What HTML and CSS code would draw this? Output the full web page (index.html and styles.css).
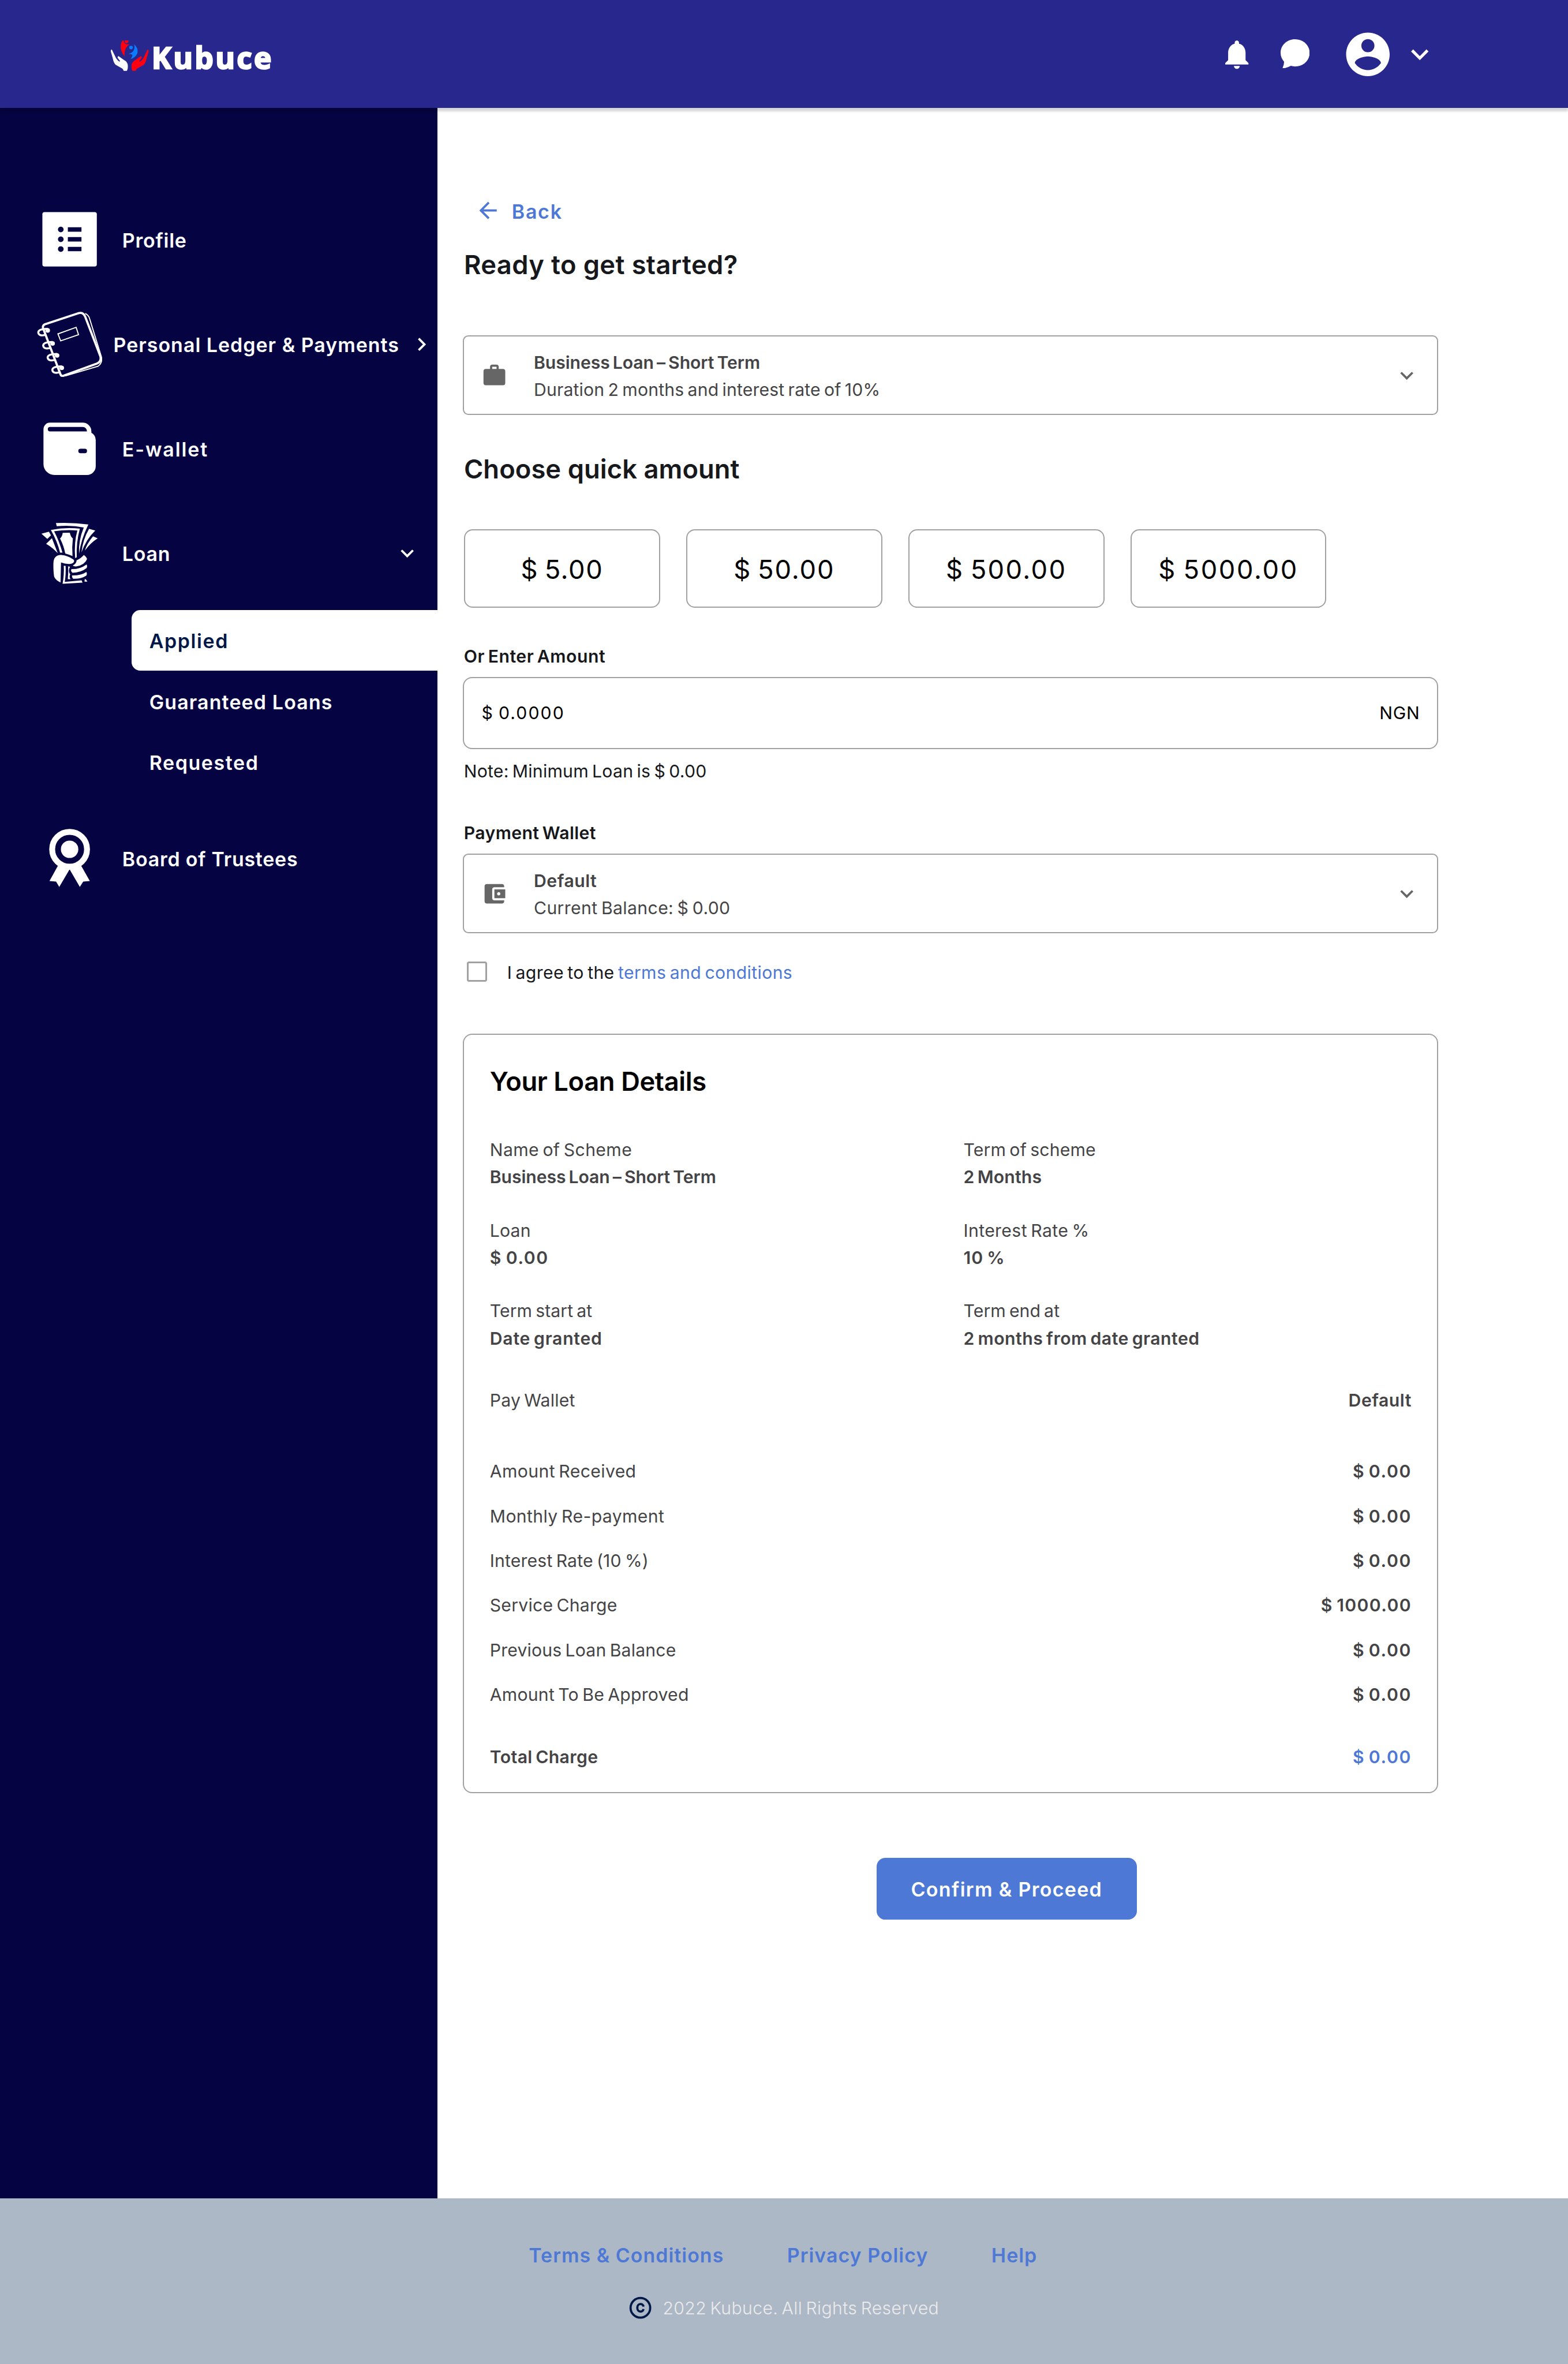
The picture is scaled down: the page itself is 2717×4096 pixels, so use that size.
FILE: index.html
```html
<!DOCTYPE html>
<html lang="en">
<head>
<meta charset="utf-8">
<title>Kubuce – Apply for a loan</title>
<link rel="stylesheet" href="styles.css">
</head>
<body>
<header class="topbar">
  <a class="logo">
    <svg class="logo-mark" viewBox="78 93 313 252">
      <defs><path id="hand" d="M84 168Q89 169 92 180Q108 212 121 240Q135 262 150 268Q158 266 152 260L134 236Q132 224 142 223L182 252Q220 272 219 305Q220 330 211 345H184Q182 328 158 317L118 294Q102 283 94 240L78 185Q78 168 84 168Z"/></defs>
      <use href="#hand" fill="#fff"/>
      <use href="#hand" fill="#ff0010" transform="translate(468 0) scale(-1 1)"/>
      <g fill="#ff0010"><path d="M175 93H184Q186 118 205 124L232 127Q185 155 192 227Q152 175 161 125Q165 105 175 93Z"/><circle cx="208" cy="101" r="15"/></g>
      <g fill="#0a7cff"><circle cx="245" cy="152" r="15"/><path d="M271 125Q305 155 299 195Q285 235 241 247Q254 235 257 214Q247 204 224 206Q248 196 259 187Q280 165 271 125Z"/></g>
    </svg>
    <span class="logo-name">Kubuce</span>
  </a>
  <nav class="tools">
    <svg class="i32" viewBox="0 0 24 24"><path d="M12 22c1.1 0 2-.9 2-2h-4c0 1.1.89 2 2 2zm6-6v-5c0-3.07-1.64-5.64-4.5-6.32V4c0-.83-.67-1.5-1.5-1.5s-1.5.67-1.5 1.5v.68C7.63 5.36 6 7.92 6 11v5l-2 2v1h16v-1l-2-2z"/></svg>
    <svg class="chat" viewBox="0 0 26.7 26.8"><path d="M13.35 0C20.8 0 26.7 5.5 26.7 12.5S20.8 25 13.35 25Q11.3 25 9.4 24.4Q6.3 26.2 2.4 26.8Q1.6 26.6 2 25.8Q3.2 23.3 3.2 20.7Q0 17 0 12.5C0 5.5 5.9 0 13.35 0Z"/></svg>
    <svg class="avatar" viewBox="0 0 24 24"><path d="M12 2C6.48 2 2 6.48 2 12s4.48 10 10 10 10-4.48 10-10S17.52 2 12 2zm0 3c1.66 0 3 1.34 3 3s-1.34 3-3 3-3-1.34-3-3 1.34-3 3-3zm0 14.2c-2.5 0-4.71-1.28-6-3.22.03-1.99 4-3.08 6-3.08 1.99 0 5.97 1.09 6 3.08-1.29 1.94-3.5 3.22-6 3.22z"/></svg>
    <svg class="i32" viewBox="0 0 24 24"><path d="M16.59 8.59L12 13.17 7.41 8.59 6 10l6 6 6-6z"/></svg>
  </nav>
</header>

<div class="body">
  <aside class="sidebar">
    <a class="nav-row">
      <svg class="nav-icon" viewBox="0 0 60 60"><path fill="#fff" d="M7 5h46a2 2 0 0 1 2 2v46a2 2 0 0 1-2 2H7a2 2 0 0 1-2-2V7a2 2 0 0 1 2-2z"/><g fill="#060343"><circle cx="21.9" cy="21" r="2.6"/><circle cx="21.9" cy="30" r="2.6"/><circle cx="21.9" cy="39" r="2.6"/><path d="M28.4 19h12.5v4H28.4zM28.4 28h12.5v4H28.4zM28.4 37h12.5v4H28.4z"/></g></svg>
      <span class="ls4">Profile</span>
    </a>
    <a class="nav-row ledger">
      <svg class="nav-icon" viewBox="34 286 60 60"><g fill="none" stroke="#fff"><path stroke-width="1" d="M78.3 287.6Q81.5 289 82.4 292.5L93.2 327.5Q94.5 333 90 336.2L60 345"/><path stroke-width="2" fill="#060343" d="M41.2 297.6Q39 298.8 39.6 301L55.6 343.5Q56.4 345.6 58.4 344.8L89 333.7Q93.6 331.8 92.2 326.8L78.4 290.8Q76.6 286.2 72.4 287.3Z"/><path stroke-width="1" d="M53.3 306.4L70 300.4L72.2 307.2L55.8 312.8Z"/></g>
        <defs><g id="ring"><path fill="none" stroke="#fff" stroke-width="1.8" d="M0-1.4Q-8.6-1.4-8.7 2Q-8 5.8-1.6 4"/><circle fill="#fff" r="2.1"/></g></defs>
        <use href="#ring" x="43.9" y="303.2"/><use href="#ring" x="48.4" y="315.2"/><use href="#ring" x="52.5" y="326.2"/><use href="#ring" x="56.8" y="337.6"/></svg>
      <span class="ls5">Personal Ledger &amp; Payments</span>
      <svg class="nav-arrow" viewBox="0 0 24 24"><path d="M8.59 16.59L13.17 12 8.59 7.41 10 6l6 6-6 6z"/></svg>
    </a>
    <a class="nav-row">
      <svg class="nav-icon" viewBox="-6 -6 60 60"><path fill="#fff" fill-rule="evenodd" d="M6 0h30a8 8 0 0 1 8 8v1.3a8 8 0 0 1 4 6.7v24a8 8 0 0 1-8 8H10A10 10 0 0 1 0 38V6a6 6 0 0 1 6-6zM6 4a2 2 0 0 0 0 4h34a4 4 0 0 0-4-4zM34 24a2 2 0 0 0 0 4h4a2 2 0 0 0 0-4z"/></svg>
      <span class="ls10">E-wallet</span>
    </a>
    <a class="nav-row loan">
      <svg class="nav-icon" viewBox="36 42 540 540"><g fill="#fff"><path d="M193 62Q330 56 461 74Q400 200 384 316Q378 210 423 99Q320 78 200 89Z"/><path d="M73 151L135 134L152 164L122 194Z"/><path d="M112 234L160 187L208 312Q165 265 112 234Z"/><path d="M151 120Q270 95 391 109Q360 220 365 346L352 352Q342 220 370 124Q280 115 178 130Q220 210 247 307L227 307Q205 215 151 120Z"/><path d="M249 143L308 142Q314 175 333 190Q324 260 330 335Q300 322 270 314Q258 250 227 190Q245 175 249 143Z"/><path d="M467 110L518 124Q440 200 404 306Q415 200 467 110Z"/><path d="M500 172L538 189Q480 225 432 290Q450 230 500 172Z"/><path d="M172 400Q172 326 235 326Q290 330 338 364Q352 378 332 394Q320 402 300 401Q268 400 235 388L231 554Q190 535 178 505Q171 460 172 400Z"/><path d="M424 326Q448 346 450 360Q430 410 360 421Q340 422 332 414Q365 395 364 370Q400 355 424 326Z"/><path d="M447 404Q455 425 445 435Q400 470 330 474Q311 458 322 443Q390 445 447 404Z"/><path d="M445 466Q453 485 443 497Q400 525 335 522Q323 510 326 495Q400 497 445 466Z"/><path d="M258 415L273 417Q276 490 266 549L405 536L413 555L248 564Q262 490 258 415Z"/><path d="M294 420L310 424Q290 455 311 488Q300 505 313 526L291 526Q297 470 294 420Z"/><path d="M429 547L432 524L442 530L453 546Z"/></g></svg>
      <span class="ls4">Loan</span>
      <svg class="nav-arrow" viewBox="0 0 24 24"><path d="M16.59 8.59L12 13.17 7.41 8.59 6 10l6 6 6-6z"/></svg>
    </a>
    <div class="subnav">
      <a class="sub active ls8">Applied</a>
      <a class="sub ls6">Guaranteed Loans</a>
      <a class="sub ls8">Requested</a>
    </div>
    <a class="nav-row">
      <svg class="nav-icon" viewBox="34 758 60 60"><g fill="#fff"><circle cx="64" cy="780" r="16" fill="none" stroke="#fff" stroke-width="5.4"/><circle cx="64" cy="780" r="8"/><path d="M53.2 795.2L45.5 809.2L51.6 809.7L54.5 814.6L64 798.4L73.4 814.6L76.5 809.7L82.6 809.2L74.7 795.2Q64 801 53.2 795.2Z"/></g></svg>
      <span class="ls4">Board of Trustees</span>
    </a>
  </aside>

  <main class="main">
    <a class="back">
      <svg class="i24" viewBox="0 0 24 24"><path d="M20 11H7.83l5.59-5.59L12 4l-8 8 8 8 1.41-1.41L7.83 13H20v-2z"/></svg>
      <span class="ls9">Back</span>
    </a>
    <h1 class="heading ls2">Ready to get started?</h1>

    <div class="select">
      <svg class="i24" viewBox="0 0 24 24"><path d="M20 6h-4V4c0-1.11-.89-2-2-2h-4c-1.11 0-2 .89-2 2v2H4c-1.11 0-1.99.89-1.99 2L2 19c0 1.11.89 2 2 2h16c1.11 0 2-.89 2-2V8c0-1.11-.89-2-2-2zm-6 0h-4V4h4v2z"/></svg>
      <div class="select-text"><b class="lsn">Business Loan – Short Term</b><span>Duration 2 months and interest rate of 10%</span></div>
      <svg class="i24" viewBox="0 0 24 24"><path d="M16.59 8.59L12 13.17 7.41 8.59 6 10l6 6 6-6z"/></svg>
    </div>

    <h2 class="heading quick ls0">Choose quick amount</h2>
    <div class="amounts">
      <button class="amount ls8">$ 5.00</button>
      <button class="amount ls10">$ 50.00</button>
      <button class="amount ls12">$ 500.00</button>
      <button class="amount ls14">$ 5000.00</button>
    </div>

    <label class="label ls3">Or Enter Amount</label>
    <div class="input"><span class="ls11">$ 0.0000</span><span class="ls4">NGN</span></div>
    <p class="note ls1">Note: Minimum Loan is $ 0.00</p>

    <label class="label ls2">Payment Wallet</label>
    <div class="select wallet">
      <svg class="i24" viewBox="0 0 24 24"><path d="M21 18v1c0 1.1-.9 2-2 2H5c-1.11 0-2-.9-2-2V5c0-1.1.89-2 2-2h14c1.1 0 2 .9 2 2v1h-9c-1.11 0-2 .9-2 2v8c0 1.1.89 2 2 2h9zm-9-2h10V8H12v8zm4-2.5c-.83 0-1.5-.67-1.5-1.5s.67-1.5 1.5-1.5 1.5.67 1.5 1.5-.67 1.5-1.5 1.5z"/></svg>
      <div class="select-text"><b class="ls3">Default</b><span class="ls2">Current Balance: $ 0.00</span></div>
      <svg class="i24" viewBox="0 0 24 24"><path d="M16.59 8.59L12 13.17 7.41 8.59 6 10l6 6 6-6z"/></svg>
    </div>

    <div class="agree"><i class="checkbox"></i><span class="ls2">I agree to the <a>terms and conditions</a></span></div>

    <section class="card">
      <h2 class="card-title">Your Loan Details</h2>
      <dl class="facts">
        <div><dt class="ls2">Name of Scheme</dt><dd class="lsn">Business Loan – Short Term</dd></div>
        <div><dt>Term of scheme</dt><dd>2 Months</dd></div>
        <div><dt>Loan</dt><dd class="ls8">$ 0.00</dd></div>
        <div><dt class="ls2">Interest Rate %</dt><dd class="ls5">10 %</dd></div>
        <div><dt class="ls0">Term start at</dt><dd class="ls4">Date granted</dd></div>
        <div><dt class="ls0">Term end at</dt><dd class="ls3">2 months from date granted</dd></div>
      </dl>
      <div class="line wallet-line"><span>Pay Wallet</span><b class="ls3">Default</b></div>
      <div class="charges">
        <div class="line"><span class="ls2">Amount Received</span><b class="ls8">$ 0.00</b></div>
        <div class="line"><span class="ls2">Monthly Re-payment</span><b class="ls8">$ 0.00</b></div>
        <div class="line"><span>Interest Rate (10 %)</span><b class="ls8">$ 0.00</b></div>
        <div class="line"><span class="ls1">Service Charge</span><b class="ls7">$ 1000.00</b></div>
        <div class="line"><span>Previous Loan Balance</span><b class="ls8">$ 0.00</b></div>
        <div class="line"><span class="ls1">Amount To Be Approved</span><b class="ls8">$ 0.00</b></div>
      </div>
      <div class="line total"><b class="ls2">Total Charge</b><b class="ls8 blue">$ 0.00</b></div>
    </section>

    <button class="submit">Confirm &amp; Proceed</button>
  </main>
</div>

<footer class="footer">
  <nav class="links"><a>Terms &amp; Conditions</a><a>Privacy Policy</a><a>Help</a></nav>
  <div class="copy">
    <svg class="i24" viewBox="0 0 24 24" fill="none" stroke="#001847" stroke-width="2"><circle cx="12" cy="12" r="9"/><path d="M14.8 10.9C14.5 7.6 9.2 7.6 9.2 11.8V12.2C9.2 16.4 14.5 16.4 14.8 13.1"/></svg>
    <span class="ls2">2022 Kubuce. All Rights Reserved</span>
  </div>
</footer>
</body>
</html>
```
FILE: styles.css
```css
/* 1rem = 10 layout units on a 1440-unit wide page */
html { font-size: 18.868px; }
* { box-sizing: border-box; margin: 0; padding: 0; }
body {
  display: flex;
  flex-direction: column;
  height: 100vh;
  overflow: hidden;
  background: #fff;
  color: #16181c;
  font: 370 1.6rem/2.4rem Inter, "Liberation Sans", sans-serif;
  letter-spacing: .009rem;
  word-spacing: -.13rem;
  white-space: nowrap;
}
svg { display: block; flex: none; }
a { color: inherit; text-decoration: none; }
button { font: inherit; }

/* letter spacing steps */
.lsn { letter-spacing: -.004rem; }
.ls0 { letter-spacing: .004rem; }
.ls1 { letter-spacing: .012rem; }
.ls2 { letter-spacing: .02rem; }
.ls3 { letter-spacing: .028rem; }
.ls4 { letter-spacing: .04rem; }
.ls5 { letter-spacing: .053rem; }
.ls6 { letter-spacing: .06rem; }
.ls7 { letter-spacing: .072rem; }
.ls8 { letter-spacing: .085rem; }
.ls9 { letter-spacing: .092rem; }
.ls10 { letter-spacing: .1rem; }
.ls11 { letter-spacing: .11rem; }
.ls12 { letter-spacing: .125rem; }
.ls14 { letter-spacing: .14rem; }

.i24 { width: 2.4rem; height: 2.4rem; }
.i32 { width: 3.2rem; height: 3.2rem; }

/* top bar */
.topbar {
  position: relative;
  flex: none;
  height: 9.9rem;
  display: flex;
  justify-content: space-between;
  padding: 0 12rem 0 10.2rem;
  background: #28278d;
  box-shadow: 0 .3rem .2rem rgba(0, 0, 0, .16);
}
.logo { display: flex; padding-top: 3.7rem; }
.logo-mark { width: 3.48rem; height: 2.8rem; }
.logo-name {
  margin: .17rem 0 0 .24rem;
  color: #fff;
  font: 700 2.73rem/2.8rem "Open Sans", sans-serif;
  letter-spacing: .175rem;
  -webkit-text-stroke: .13rem #fff;
  paint-order: stroke fill;
  stroke-linejoin: round;
}
.tools { display: flex; align-items: center; padding-top: .1rem; fill: #fff; }
.chat { width: 2.67rem; height: 2.68rem; margin: -.14rem 2.93rem 0 2.4rem; }
.avatar { width: 4.8rem; height: 4.8rem; margin-right: .8rem; }

.body { flex: none; height: 192rem; display: flex; }

/* sidebar */
.sidebar {
  flex: none;
  width: 40.2rem;
  padding-top: 7.3rem;
  background: #060343;
  color: #fff;
  font-size: 1.8rem;
  font-weight: 600;
  word-spacing: 0;
}
.nav-row { display: flex; align-items: center; height: 9.6rem; padding-left: 3.4rem; }
.nav-row span { padding: .15rem 0 0 1.83rem; }
.nav-row.ledger span { padding-left: 1.02rem; }
.nav-row.ledger { padding-right: .3rem; }
.nav-row.loan { padding-right: 1.6rem; }
.nav-icon { width: 6rem; height: 6rem; }
.nav-arrow { width: 2.4rem; height: 2.4rem; margin-left: auto; fill: #fff; }
.subnav { margin: .4rem 0 1.2rem 12.1rem; }
.sub { display: block; height: 5.6rem; padding: .18rem 0 0 1.61rem; line-height: 5.4rem; }
.sub.active { background: #fff; color: #001847; border-radius: .8rem 0 0 .8rem; }

/* main column */
.main { width: 91.89rem; padding: 8.25rem 0 0 2.32rem; }
.back { display: flex; align-items: center; gap: 1rem; height: 2.4rem; padding-left: 1.08rem; color: #4d78d5; fill: #4d78d5; font-size: 1.8rem; font-weight: 600; }
.back span { padding-top: .18rem; }
.heading { margin: 2.28rem 0 0 .09rem; font-size: 2.4rem; font-weight: 600; line-height: 3rem; word-spacing: 0; }
.heading.quick { margin-top: 3.53rem; }
.select {
  display: flex;
  align-items: center;
  height: 7.3rem;
  margin-top: 4.97rem;
  padding: 0 1.58rem;
  border: 2px solid #a1a1a1;
  border-radius: .5rem;
  fill: #666;
  color: #444446;
}
.select .i24 { margin-top: .1rem; }
.select.wallet { margin-top: .66rem; }
.select-text { flex: 1; padding: .22rem 0 0 2.42rem; line-height: 2.5rem; }
.select-text > * { display: block; }
b { font-weight: 600; }
.amounts { display: flex; gap: 2.4rem; margin: 3.97rem 0 0 .1rem; }
.amount { width: 18rem; height: 7.2rem; border: 2px solid #a1a1a1; border-radius: .8rem; background: none; color: #000; font-size: 2.4rem; word-spacing: -.2rem; padding-top: .15rem; }
.label { display: block; margin: 3.32rem 0 0 .08rem; font-weight: 600; }
.input {
  display: flex;
  justify-content: space-between;
  align-items: center;
  height: 6.6rem;
  margin-top: .67rem;
  padding: .05rem 1.58rem 0 1.6rem;
  border: 2px solid #a1a1a1;
  border-radius: .85rem;
  color: #000;
}
.note { margin: .83rem 0 0 .08rem; }
.agree { display: flex; height: 2.4rem; margin-top: 2.35rem; }
.checkbox { width: 1.85rem; height: 1.85rem; margin: .25rem 1.84rem 0 .36rem; border: .2rem solid #a1a1a1; border-radius: .2rem; }
.agree span { padding-top: .08rem; }
.agree a { color: #4d78d5; }

.card {
  height: 69.77rem;
  margin-top: 4.46rem;
  padding: 2.82rem 2.35rem 0 2.36rem;
  border: 2px solid #a1a1a1;
  border-radius: .85rem;
  color: #444446;
}
.card-title { color: #000; font-size: 2.4rem; font-weight: 600; line-height: 3rem; letter-spacing: -.02rem; word-spacing: 0; }
.facts { display: grid; grid-template-columns: 43.5rem 1fr; row-gap: 2.4rem; margin-top: 3.54rem; line-height: 2.5rem; }
.facts dd { font-weight: 600; }
.line { display: flex; justify-content: space-between; }
.wallet-line { margin-top: 3.25rem; }
.charges { margin-top: 3.28rem; line-height: 4.1rem; }
.total { margin-top: 2.45rem; }
.blue { color: #4d78d5; }

.submit {
  display: block;
  width: 23.9rem;
  height: 5.7rem;
  margin: 5.92rem 0 0 37.98rem;
  padding-top: .15rem;
  border: 0;
  border-radius: .8rem;
  background: #4d78d5;
  color: #fff;
  font-size: 1.8rem;
  font-weight: 600;
  letter-spacing: .07rem;
}

/* footer */
.footer { flex: 1; display: flex; flex-direction: column; align-items: center; padding-top: 4rem; background: #adb8c7; }
.links { display: flex; gap: 5.8rem; margin-right: .18rem; color: #4d78d5; font-size: 1.8rem; font-weight: 600; letter-spacing: .053rem; word-spacing: 0; }
.copy { display: flex; align-items: center; gap: .85rem; margin: 2.4rem .15rem 0 0; color: #ebebeb; font-weight: 300; }
.copy span { padding-top: .1rem; }
```
